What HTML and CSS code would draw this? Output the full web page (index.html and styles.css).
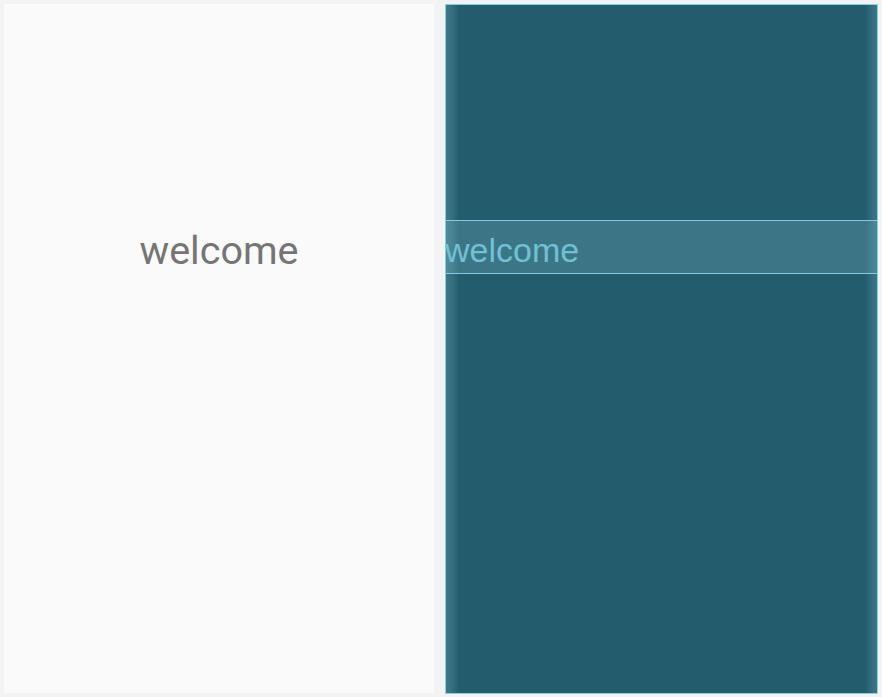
FILE: index.html
```html
<!DOCTYPE html>
<html>
<head>
<meta charset="utf-8">
<link rel="stylesheet" href="styles.css">
</head>
<body>
<div class="screen">
  <div class="panel-light">
    <div class="greeting">welcome</div>
  </div>
  <div class="panel-dark">
    <div class="band"><span class="band-text">welcome</span></div>
  </div>
</div>
</body>
</html>
```
FILE: styles.css
```css
html, body {
  margin: 0;
  padding: 0;
  background: #f3f3f3;
  width: 882px;
  height: 697px;
  overflow: hidden;
}
.screen {
  display: flex;
  padding: 4px;
  gap: 11px;
  height: 697px;
  box-sizing: border-box;
}
.panel-light {
  width: 430px;
  height: 689px;
  background: #fafafa;
  display: flex;
  flex-direction: column;
  align-items: center;
}
.greeting {
  margin-top: 221px;
  font-family: Roboto, sans-serif;
  font-size: 39.5px;
  line-height: 52px;
  color: #757575;
}
.panel-dark {
  width: 433px;
  height: 690px;
  box-sizing: border-box;
  border: 1px solid #7fd3e4;
  background:
    linear-gradient(to right, rgba(90,150,165,0.5), rgba(90,150,165,0.3) 7px, rgba(90,150,165,0) 13px),
    linear-gradient(to left, rgba(90,150,165,0.45), rgba(90,150,165,0.3) 5px, rgba(90,150,165,0) 12px),
    #235c6c;
  padding-top: 215px;
}
.band {
  height: 54px;
  box-sizing: border-box;
  border-top: 1px solid #7ccde0;
  border-bottom: 1px solid #7ccde0;
  background: rgba(120, 180, 195, 0.3);
  display: flex;
  align-items: center;
}
.band-text {
  font-family: "Liberation Sans", Arial, sans-serif;
  font-size: 34px;
  line-height: 52px;
  color: #6fc1d3;
  margin-top: 5px;
  margin-left: -1px;
}
```
